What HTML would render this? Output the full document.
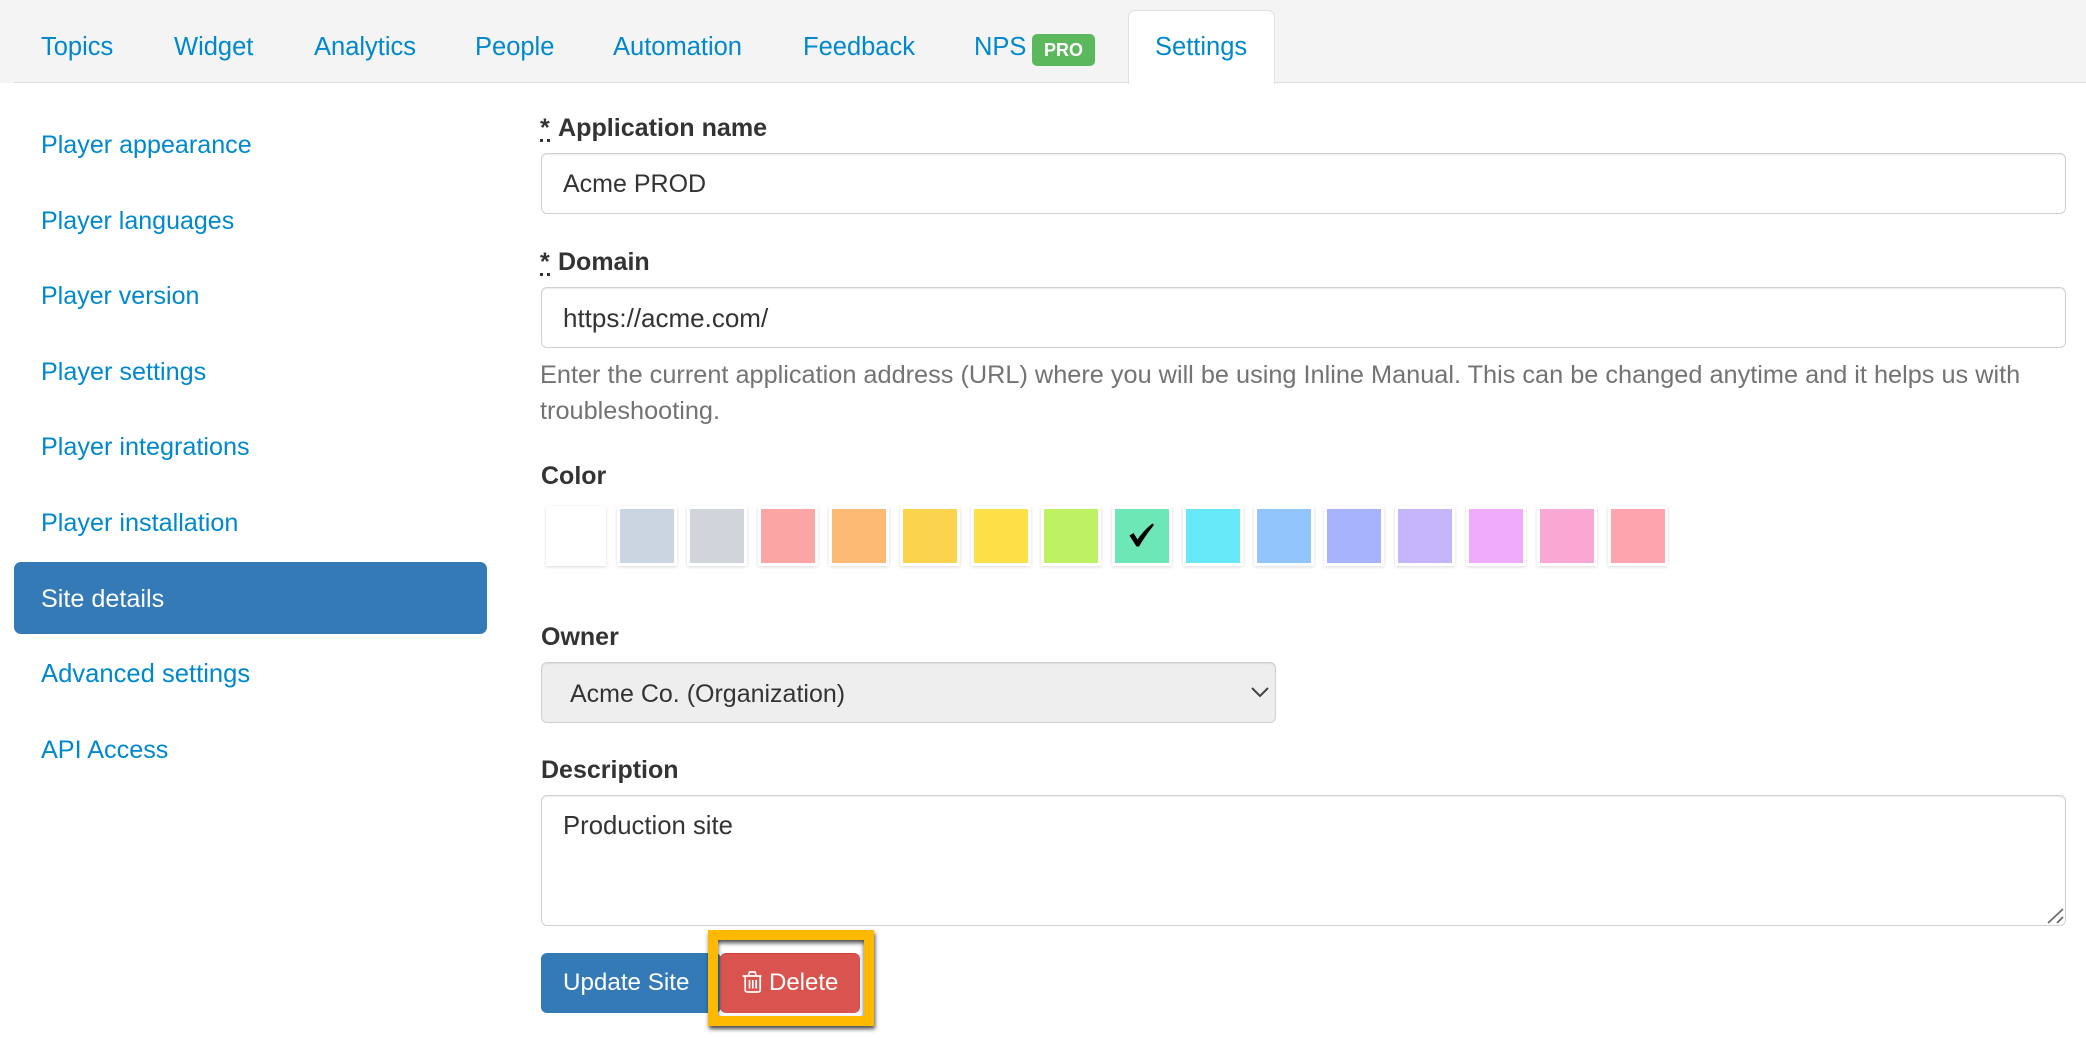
<!DOCTYPE html>
<html lang="en">
<head>
<meta charset="utf-8">
<title>Site details</title>
<style>
html,body{margin:0;padding:0;background:#fff}
body{position:relative;width:2086px;height:1038px;overflow:hidden;font-family:"Liberation Sans",Arial,sans-serif;font-size:25px;line-height:30px;color:#333}
*{box-sizing:border-box}
.t{position:absolute;white-space:nowrap;line-height:30px}
a.t{color:#0088cc;text-decoration:none;font-size:25.2px}
a.tb{font-size:25.5px;top:32px}
.bar{position:absolute;left:0;top:0;width:2086px;height:83px;background:#f4f4f4}
.line{position:absolute;left:14px;top:82px;width:2072px;height:1px;background:#ddd}
.tab{position:absolute;left:1128px;top:10px;width:147px;height:74px;background:#fff;border:1px solid #e0e0e0;border-bottom:0;border-radius:7px 7px 0 0}
.badge{position:absolute;left:1032px;top:34px;width:63px;height:32px;background:#5cb85c;border-radius:5px;color:#fff;font-weight:bold;font-size:18px;line-height:32px;text-align:center}
.pill{position:absolute;left:14px;top:562px;width:473px;height:72px;background:#337ab7;border-radius:7px}
b.t{font-weight:bold}
.dots{position:absolute;left:540px;width:10px;height:0;border-top:3px dotted #333}
input,select,textarea{position:absolute;margin:0;font-family:inherit;font-size:25px;color:#333;background:#fff;border:1px solid #d0d0d0;border-radius:6px;box-shadow:inset 0 1px 1px rgba(0,0,0,.075);outline:0}
input{left:541px;width:1525px;height:61px;padding:2px 21px 0}
select{left:541px;top:662px;width:735px;height:61px;padding:2px 0 0 28px;background:#eee;appearance:none;-webkit-appearance:none}
textarea{left:541px;top:795px;width:1525px;height:131px;padding:15px 21px 0;font-size:25.7px;line-height:30px;resize:none}
.help{color:#737373;font-size:25.3px}
.sw{position:absolute;top:506px;width:60px;height:60px;border:3px solid #fff;box-shadow:0 1px 3px rgba(0,0,0,.15)}
.btn{position:absolute;top:953px;height:60px;border-radius:6px;color:#fff;font-size:24.2px;line-height:60px}
.frame{position:absolute;left:708px;top:930px;width:166px;height:96px;border:10px solid #ffb900;box-shadow:1px 3px 4px rgba(0,0,0,.7),inset 0 3px 4px rgba(0,0,0,.7)}
svg{position:absolute;overflow:visible}
</style>
</head>
<body>
<div class="bar"></div>
<div class="line"></div>
<div class="tab"></div>
<a class="t tb" style="left:41px">Topics</a>
<a class="t tb" style="left:174px">Widget</a>
<a class="t tb" style="left:314px">Analytics</a>
<a class="t tb" style="left:475px">People</a>
<a class="t tb" style="left:613px">Automation</a>
<a class="t tb" style="left:803px">Feedback</a>
<a class="t tb" style="left:974px">NPS</a>
<span class="badge">PRO</span>
<a class="t tb" style="left:1155px">Settings</a>

<a class="t" style="left:41px;top:130px;font-size:25.1px">Player appearance</a>
<a class="t" style="left:41px;top:206px;font-size:25px">Player languages</a>
<a class="t" style="left:41px;top:281px;font-size:25px">Player version</a>
<a class="t" style="left:41px;top:357px">Player settings</a>
<a class="t" style="left:41px;top:432px">Player integrations</a>
<a class="t" style="left:41px;top:508px">Player installation</a>
<div class="pill"></div>
<a class="t" style="left:41px;top:584px;color:#fff">Site details</a>
<a class="t" style="left:41px;top:659px;font-size:25.6px">Advanced settings</a>
<a class="t" style="left:41px;top:735px">API Access</a>

<b class="t" style="left:540px;top:113px">*</b>
<b class="t" style="left:558px;top:113px;font-size:25.1px">Application name</b>
<div class="dots" style="top:139px"></div>
<input type="text" value="Acme PROD" style="top:153px">
<b class="t" style="left:540px;top:247px">*</b>
<b class="t" style="left:558px;top:247px">Domain</b>
<div class="dots" style="top:273px"></div>
<input type="text" value="https://acme.com/" style="top:287px;font-size:26px">
<div class="t help" style="left:540px;top:360px">Enter the current application address (URL) where you will be using Inline Manual. This can be changed anytime and it helps us with</div>
<div class="t help" style="left:540px;top:396px">troubleshooting.</div>

<b class="t" style="left:541px;top:461px">Color</b>
<div class="sw" style="left:546px;background:#fff"></div>
<div class="sw" style="left:617px;background:#cbd5e1"></div>
<div class="sw" style="left:687px;background:#d1d5db"></div>
<div class="sw" style="left:758px;background:#fca5a5"></div>
<div class="sw" style="left:829px;background:#fdba74"></div>
<div class="sw" style="left:900px;background:#fcd34d"></div>
<div class="sw" style="left:971px;background:#fde047"></div>
<div class="sw" style="left:1041px;background:#bef264"></div>
<div class="sw" style="left:1112px;background:#6ee7b7"></div>
<div class="sw" style="left:1183px;background:#67e8f9"></div>
<div class="sw" style="left:1254px;background:#93c5fd"></div>
<div class="sw" style="left:1324px;background:#a5b4fc"></div>
<div class="sw" style="left:1395px;background:#c4b5fd"></div>
<div class="sw" style="left:1466px;background:#f0abfc"></div>
<div class="sw" style="left:1537px;background:#f9a8d4"></div>
<div class="sw" style="left:1608px;background:#fda4af"></div>
<svg style="left:0;top:0" width="2086" height="1038"><path d="M1129.500 535.500 L1133.500 533 L1137.500 539.500 C1141.500 533.500 1146.500 528 1152.500 523.500 L1154 525 C1148.500 531.500 1143.500 539 1139 546.500 L1136.500 546.500 Z" fill="#000"/></svg>

<b class="t" style="left:541px;top:622px">Owner</b>
<select><option>Acme Co. (Organization)</option></select>
<svg style="left:0;top:0" width="2086" height="1038"><path d="M1252 688 L1260 696 L1268 688" fill="none" stroke="#444" stroke-width="2"/></svg>

<b class="t" style="left:541px;top:755px">Description</b>
<textarea>Production site</textarea>
<svg style="left:0;top:0" width="2086" height="1038"><path d="M2048 923 L2063 909 M2057 923 L2063 917" fill="none" stroke="#666" stroke-width="1.600"/></svg>

<div class="btn" style="left:541px;width:180px;background:#337ab7;padding-left:22px">Update Site</div>
<div class="btn" style="left:720px;width:140px;background:#d9534f;border-top:1px solid #d43f3a;padding-left:49px;line-height:58px;font-size:24px">Delete</div>
<svg style="left:0;top:0" width="2086" height="1038"><path d="M742.500 976 H761.500 M745.200 976 V990 Q745.200 992 747.500 992 H758 Q760.200 992 760.200 990 V976 M748.500 975 L749.500 972 H755 L756 975 M749.500 980 V988.500 M752.800 980 V988.500 M756.200 980 V988.500" fill="none" stroke="#fff" stroke-width="1.700"/></svg>
<div class="frame"></div>
</body>
</html>
